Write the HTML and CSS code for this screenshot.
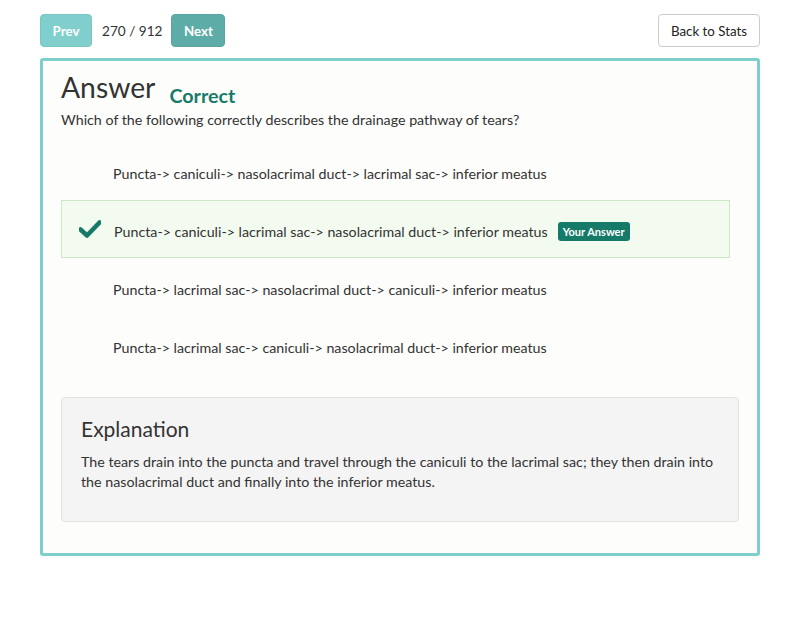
FILE: index.html
```html
<!DOCTYPE html>
<html>
<head>
<meta charset="utf-8">
<link rel="stylesheet" href="styles.css">
</head>
<body>
<div class="page">
  <div class="toolbar">
    <div class="nav">
      <button class="btn btn-prev">Prev</button>
      <span class="count">270 / 912</span>
      <button class="btn btn-next">Next</button>
    </div>
    <button class="btn btn-back">Back to Stats</button>
  </div>
  <div class="card">
    <div class="heading">
      <h1 class="title">Answer</h1>
      <span class="status">Correct</span>
    </div>
    <p class="question">Which of the following correctly describes the drainage pathway of tears?</p>
    <div class="options">
      <div class="option"><span class="mark"></span><span class="text">Puncta-&gt; caniculi-&gt; nasolacrimal duct-&gt; lacrimal sac-&gt; inferior meatus</span></div>
      <div class="option selected"><span class="mark"><svg width="22" height="18" viewBox="0 0 22 18"><path d="M1.5 9.5 L8 15.5 L20.5 2.5" fill="none" stroke="#177a69" stroke-width="4.6" stroke-linecap="round" stroke-linejoin="round"/></svg></span><span class="text">Puncta-&gt; caniculi-&gt; lacrimal sac-&gt; nasolacrimal duct-&gt; inferior meatus</span><span class="badge">Your Answer</span></div>
      <div class="option"><span class="mark"></span><span class="text">Puncta-&gt; lacrimal sac-&gt; nasolacrimal duct-&gt; caniculi-&gt; inferior meatus</span></div>
      <div class="option"><span class="mark"></span><span class="text">Puncta-&gt; lacrimal sac-&gt; caniculi-&gt; nasolacrimal duct-&gt; inferior meatus</span></div>
    </div>
    <div class="explanation">
      <h2 class="exp-title">Explanation</h2>
      <p class="exp-text">The tears drain into the puncta and travel through the caniculi to the lacrimal sac; they then drain into the nasolacrimal duct and finally into the inferior meatus.</p>
    </div>
  </div>
</div>
</body>
</html>
```
FILE: styles.css
```css
* { box-sizing: border-box; }
body {
  margin: 0;
  background: #fff;
  font-family: Lato, "Open Sans", sans-serif;
  color: #333;
}
.page {
  padding: 14px 40px 0 40px;
}
.toolbar {
  display: flex;
  justify-content: space-between;
  align-items: center;
  height: 33px;
}
.nav {
  display: flex;
  align-items: center;
}
.btn {
  font-family: Lato, sans-serif;
  height: 33px;
  border-radius: 4px;
  font-size: 13.3px;
  padding: 0 12px;
  border: 1px solid transparent;
  cursor: pointer;
}
.btn-prev {
  background: #80cfcc;
  border-color: #78c7c3;
  color: #fff;
  font-weight: bold;
  width: 52px;
  padding: 0;
}
.btn-next {
  background: #5eaca8;
  border-color: #58a5a1;
  color: #fff;
  font-weight: bold;
  width: 54px;
  padding: 0;
}
.count {
  font-size: 13.6px;
  color: #333;
  margin: 0 9px 0 10px;
}
.btn-back {
  background: #fff;
  border-color: #ccc;
  color: #222;
  width: 102px;
  padding: 0;
}
.card {
  margin-top: 11px;
  border: 3px solid #7ecfcb;
  border-radius: 3px;
  background: #fdfdfb;
  padding: 8px 18px 31px 18px;
}
.heading {
  display: flex;
  align-items: baseline;
}
.title {
  margin: 0;
  font-size: 28.3px;
  font-weight: normal;
  color: #333;
  line-height: 36px;
}
.status {
  margin-left: 14px;
  font-size: 19.7px;
  font-weight: bold;
  color: #177a69;
  position: relative;
  top: 5px;
}
.question {
  margin: 5px 0 0 0;
  font-size: 14.25px;
  line-height: 20px;
}
.options {
  margin-top: 12px;
  margin-right: 9px;
}
.option {
  height: 58px;
  display: flex;
  align-items: center;
  border: 1px solid transparent;
  font-size: 14.25px;
  color: #333;
  padding-top: 4px;
}
.option.selected {
  background: #f3fbf1;
  border-color: #cbe7c5;
}
.mark {
  width: 51px;
  display: flex;
  justify-content: center;
  padding-left: 3px;
  margin-top: -4px;
}
.option.selected .mark {
  width: 52px;
}
.badge {
  margin-left: 10px;
  background: #167a69;
  color: #fff;
  font-size: 11px;
  font-weight: bold;
  line-height: 13px;
  padding: 3px 5px 3px;
  border-radius: 3px;
}
.explanation {
  margin-top: 23px;
  background: #f4f4f4;
  border: 1px solid #e2e2e2;
  border-radius: 4px;
  padding: 17px 19px 28px 19px;
  height: 125px;
}
.exp-title {
  margin: 0;
  font-size: 21px;
  font-weight: normal;
  color: #333;
  line-height: 28px;
}
.exp-text {
  margin: 9px 0 0 0;
  font-size: 14.25px;
  line-height: 20px;
}
```
